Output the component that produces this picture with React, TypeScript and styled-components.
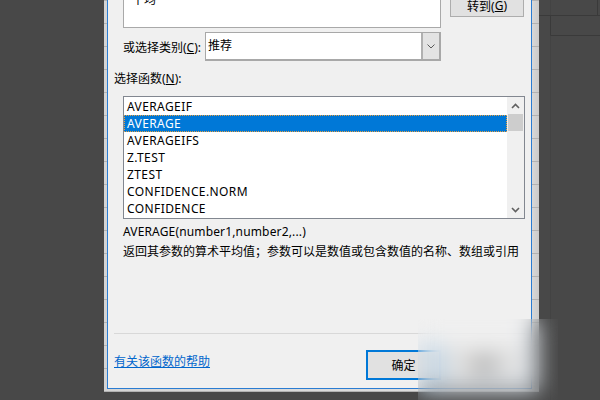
import styled, { createGlobalStyle } from "styled-components";

const functions = [
  "AVERAGEIF",
  "AVERAGE",
  "AVERAGEIFS",
  "Z.TEST",
  "ZTEST",
  "CONFIDENCE.NORM",
  "CONFIDENCE",
];

const GlobalStyle = createGlobalStyle`
  html, body {
    margin: 0;
    padding: 0;
    background: #484848;
  }
  body {
    font-family: "Noto Sans", "Noto Sans CJK SC", sans-serif;
    font-size: 12px;
    color: #000;
  }
`;

const Chevron = ({ up = false }: { up?: boolean }) => (
  <svg width="9" height="6" viewBox="0 0 9 6">
    <path
      d={up ? "M1 5 L4.5 1.5 L8 5" : "M1 1 L4.5 4.5 L8 1"}
      fill="none"
      stroke="#606060"
      strokeWidth="1.6"
    />
  </svg>
);

const App = () => {
  return (
    <Page>
      <GlobalStyle />
      <LeftShade />
      <Frame>
        <Dialog>
          <TopRow>
            <SearchBox>平均</SearchBox>
            <GoButton>
              转到(<u>G</u>)
            </GoButton>
          </TopRow>

          <CategoryRow>
            <CategoryLabel>
              或选择类别(<u>C</u>):
            </CategoryLabel>
            <Combo>
              <ComboValue>推荐</ComboValue>
              <ComboArrow>
                <svg width="8" height="5" viewBox="0 0 8 5">
                  <path d="M0.5 0.5 L4 4 L7.5 0.5" fill="none" stroke="#5a5a5a" strokeWidth="1" />
                </svg>
              </ComboArrow>
            </Combo>
          </CategoryRow>

          <FunctionLabel>
            选择函数(<u>N</u>):
          </FunctionLabel>

          <ListBox>
            <Items>
              {functions.map((name, index) => (
                <Item key={index} $selected={name === "AVERAGE"}>
                  {name}
                </Item>
              ))}
            </Items>
            <ScrollBar>
              <ScrollArrow>
                <Chevron up />
              </ScrollArrow>
              <Thumb />
              <ScrollTrack />
              <ScrollArrow>
                <Chevron />
              </ScrollArrow>
            </ScrollBar>
          </ListBox>

          <Signature>AVERAGE(number1,number2,...)</Signature>
          <Description>返回其参数的算术平均值；参数可以是数值或包含数值的名称、数组或引用</Description>

          <Separator />

          <BottomRow>
            <HelpLink>有关该函数的帮助</HelpLink>
            <Spacer />
            <DialogButton $primary>确定</DialogButton>
            <DialogButton>取消</DialogButton>
          </BottomRow>
        </Dialog>
      </Frame>
      <RightShade>
        <svg width="61" height="400" viewBox="0 0 61 400">
          <path d="M11.5 0 V400" stroke="#434343" strokeWidth="1" />
          <path d="M0 15.5 H61 M11.5 15.5 V35.5 H61 M58.5 0 V15.5" stroke="#3a3a3a" strokeWidth="1" fill="none" />
        </svg>
      </RightShade>
      <Smudge />
    </Page>
  );
};

export default App;

const Page = styled.div`
  position: relative;
  display: flex;
  align-items: flex-start;
  width: 600px;
  height: 400px;
  overflow: hidden;
  background: #484848;
`;

const LeftShade = styled.div`
  flex: none;
  width: 104px;
  height: 400px;
`;

const RightShade = styled.div`
  flex: 1;
  height: 400px;

  svg {
    display: block;
  }
`;

const Frame = styled.div`
  flex: none;
  display: flex;
  align-items: flex-start;
  box-sizing: border-box;
  width: 435px;
  height: 392px;
  padding: 0 7px 3px 3px;
  background: repeating-linear-gradient(to bottom, #b2b2b2 0 1px, transparent 1px 23px),
    linear-gradient(to right, #d4d4d4, #dedede 80%, #e4e4e4 97%, #cacaca);
`;

const Dialog = styled.div`
  display: flex;
  flex-direction: column;
  box-sizing: border-box;
  width: 425px;
  margin-top: -26px;
  border: 1px solid #2a7cd2;
  background: #f0f0f0;
`;

const TopRow = styled.div`
  display: flex;
  align-items: flex-start;
  gap: 9px;
  padding: 0 7px 0 15px;
`;

const SearchBox = styled.div`
  box-sizing: border-box;
  width: 318px;
  height: 53px;
  padding: 15px 8px 0;
  line-height: 17px;
  border: 1px solid #a9a9a9;
  background: #fff;
`;

const GoButton = styled.div`
  display: flex;
  align-items: center;
  justify-content: center;
  box-sizing: border-box;
  width: 74px;
  height: 23px;
  margin-top: 19px;
  border: 1px solid #adadad;
  background: #e1e1e1;
`;

const CategoryRow = styled.div`
  display: flex;
  align-items: center;
  height: 29px;
  margin-top: 4px;
  padding-left: 15px;
`;

const CategoryLabel = styled.div`
  width: 82px;
  white-space: nowrap;
`;

const Combo = styled.div`
  display: flex;
  box-sizing: border-box;
  width: 236px;
  height: 29px;
  border: 1px solid #a8a8a8;
  border-right-width: 2px;
  border-bottom-width: 2px;
  background: #fff;
`;

const ComboValue = styled.div`
  flex: 1;
  padding-left: 2px;
  line-height: 26px;
`;

const ComboArrow = styled.div`
  display: flex;
  align-items: center;
  justify-content: center;
  width: 16px;
  border-left: 2px solid #b0b0b0;
  background: #e3e3e3;
`;

const FunctionLabel = styled.div`
  margin-top: 9px;
  padding-left: 6px;
  line-height: 17px;
`;

const ListBox = styled.div`
  display: flex;
  box-sizing: border-box;
  width: 402px;
  height: 123px;
  margin: 9px 0 0 15px;
  border: 1px solid #828790;
  background: #fff;
`;

const Items = styled.div`
  flex: 1;
  display: flex;
  flex-direction: column;
  padding-top: 1px;
`;

const Item = styled.div<{ $selected?: boolean }>`
  box-sizing: border-box;
  height: 17px;
  padding-left: 2px;
  line-height: 15px;
  letter-spacing: 0.4px;
  white-space: nowrap;
  border: 1px dotted ${({ $selected }) => ($selected ? "#e8a040" : "transparent")};
  background: ${({ $selected }) => ($selected ? "#0078d7" : "transparent")};
  color: ${({ $selected }) => ($selected ? "#fff" : "#000")};
`;

const ScrollBar = styled.div`
  display: flex;
  flex-direction: column;
  width: 17px;
  background: #f0f0f0;
`;

const ScrollArrow = styled.div`
  display: flex;
  align-items: center;
  justify-content: center;
  height: 17px;
`;

const Thumb = styled.div`
  height: 17px;
  margin: 0 1px;
  background: #cdcdcd;
`;

const ScrollTrack = styled.div`
  flex: 1;
`;

const Signature = styled.div`
  margin-top: 3px;
  padding-left: 15px;
  line-height: 20px;
  letter-spacing: 0.15px;
`;

const Description = styled.div`
  padding-left: 15px;
  line-height: 20px;
  white-space: nowrap;
`;

const Separator = styled.div`
  margin: 71px 6px 0 6px;
  border-top: 1px solid #d8d8d8;
`;

const BottomRow = styled.div`
  display: flex;
  align-items: flex-start;
  gap: 6px;
  padding: 0 9px 8px 6px;
`;

const HelpLink = styled.a`
  margin-top: 19px;
  line-height: 17px;
  color: #0066cc;
  text-decoration: underline;
  cursor: pointer;
`;

const Spacer = styled.div`
  flex: 1;
`;

const DialogButton = styled.div<{ $primary?: boolean }>`
  display: flex;
  align-items: center;
  justify-content: center;
  box-sizing: border-box;
  width: 75px;
  height: 30px;
  margin-top: 16px;
  border: ${({ $primary }) => ($primary ? "2px solid #0078d7" : "1px solid #adadad")};
  background: #e1e1e1;
`;

const Smudge = styled.div`
  position: absolute;
  left: 418px;
  top: 319px;
  width: 140px;
  height: 81px;
  backdrop-filter: blur(11px);
`;
